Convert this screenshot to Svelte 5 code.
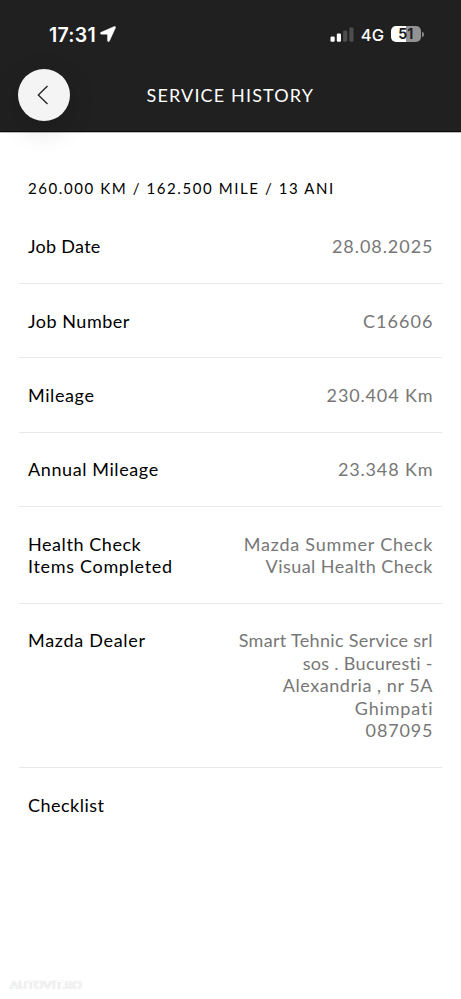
<script>
  // Each line is [text, tracking in px].
  const rows = [
    { label: [['Job Date', 0.28]], value: [['28.08.2025', 0.95]] },
    { label: [['Job Number', 0.52]], value: [['C16606', 1.05]] },
    { label: [['Mileage', 0.6]], value: [['230.404 Km', 0.85]] },
    { label: [['Annual Mileage', 0.6]], value: [['23.348 Km', 0.85]] },
    {
      label: [['Health Check', 0.56], ['Items Completed', 0.68]],
      value: [['Mazda Summer Check', 0.76], ['Visual Health Check', 0.46]]
    },
    {
      label: [['Mazda Dealer', 0.7]],
      value: [
        ['Smart Tehnic Service srl', 0.32],
        ['sos . Bucuresti -', 0.3],
        ['Alexandria , nr 5A', 0.55],
        ['Ghimpati', 0.83],
        ['087095', 0.85]
      ]
    },
    { label: [['Checklist', 0.48]], value: [] }
  ];
</script>

<div class="screen">
  <header>
    <div class="status">
      <span class="time">17:31</span>
      <svg class="arrow" width="16" height="16" viewBox="0 0 16 16"><path d="M14.2.5 1 6.3C-.2 6.900.1 8.300 1.300 8.300h5.600c.4 0 .6.2.6.6v5.600c0 1.400 1.500 1.600 2 .4L15.500 1.800C15.900.8 15.200.1 14.200.5Z" fill="#fff" stroke="#fff" stroke-width="0.400" /></svg>
      <span class="gap"></span>
      <svg class="signal" width="24" height="16" viewBox="0 0 24 16">
        <rect x="0.500" y="9.500" width="4.200" height="5.200" rx="1.200" fill="#fff" />
        <rect x="6.800" y="6.500" width="4.200" height="8.200" rx="1.200" fill="#fff" />
        <rect x="13.100" y="3.500" width="4.200" height="11.200" rx="1.200" fill="#4d4d4d" />
        <rect x="19.300" y="0.500" width="4.200" height="14.200" rx="1.200" fill="#4d4d4d" />
      </svg>
      <span class="net">4G</span>
      <span class="battery"><span class="level">51</span><i class="cap"></i></span>
    </div>
    <div class="bar">
      <button aria-label="Back">
        <svg width="12" height="20" viewBox="0 0 12 20"><path d="M10.500 1 1.300 10l9.200 9" fill="none" stroke="#222" stroke-width="1.300" /></svg>
      </button>
      <h1>SERVICE HISTORY</h1>
    </div>
  </header>
  <main>
    <h2>260.000 KM / 162.500 MILE / 13 ANI</h2>
    {#each rows as row}
      <section class="row">
        <div class="label">
          {#each row.label as [text, tracking]}<div style="letter-spacing: {tracking}px">{text}</div>{/each}
        </div>
        <div class="value">
          {#each row.value as [text, tracking]}<div style="letter-spacing: {tracking}px; margin-right: {-tracking}px">{text}</div>{/each}
        </div>
      </section>
    {/each}
  </main>
  <footer>AUTOVIT.RO</footer>
</div>

<style>
  .screen {
    width: 461px;
    height: 999px;
    display: flex;
    flex-direction: column;
    overflow: hidden;
    background: #fff;
    font-family: Lato, sans-serif;
  }
  header {
    height: 132px;
    flex: none;
    box-sizing: border-box;
    background: #202020;
    border-bottom: 1px solid #0c0c0c;
    box-shadow: 0 1px #b8b8b8;
    color: #fff;
  }
  .status {
    height: 69px;
    display: flex;
    align-items: center;
    padding: 0 40.500px 0 49px;
    box-sizing: border-box;
    font-family: Inter, sans-serif;
  }
  .time { font-size: 19.500px; font-weight: 600; letter-spacing: 0.250px; }
  .arrow { margin-left: 4.500px; margin-top: -1px; }
  .gap { flex: 1; }
  .net { font-size: 16.500px; font-weight: 500; margin: 0 7px 0 6.500px; }
  .battery {
    position: relative;
    width: 29.500px;
    height: 16px;
    margin-top: -1px;
    border-radius: 5px;
    background: linear-gradient(90deg, #fff 51%, #929292 51%);
    color: #202020;
    font-size: 14px;
    line-height: 16px;
    font-weight: 700;
    text-align: center;
  }
  .cap {
    position: absolute;
    left: 30.500px;
    top: 5.500px;
    width: 2px;
    height: 5px;
    border-radius: 0 2px 2px 0;
    background: #858585;
  }
  .bar { display: flex; align-items: center; height: 52px; padding-left: 18px; }
  button {
    width: 52px;
    height: 52px;
    flex: none;
    padding: 0 2px 0 0;
    border: 0;
    border-radius: 50%;
    background: #f4f4f4;
    display: flex;
    align-items: center;
    justify-content: center;
    box-shadow: 0 8px 28px rgba(0, 0, 0, 0.160);
  }
  h1 { margin: 0 0 0 76.500px; font-size: 18px; font-weight: 400; letter-spacing: 1.150px; white-space: nowrap; }
  main { padding: 0 19px; color: #000; flex: 1; }
  h2 {
    margin: 0;
    padding: 45px 9px 9.700px;
    font-size: 15px;
    line-height: 23px;
    font-weight: 400;
    letter-spacing: 1.580px;
    white-space: nowrap;
  }
  .row {
    display: flex;
    justify-content: space-between;
    padding: 25.800px 9.500px 25px 9px;
    border-bottom: 1px solid #e9e9e9;
    font-size: 18px;
    line-height: 22.500px;
    white-space: nowrap;
  }
  .row:last-child { border: 0; }
  .value { color: #777; text-align: right; }
  footer { padding: 0 0 6px 10px; font-size: 12px; line-height: 16px; letter-spacing: 0.200px; color: #fff; text-shadow: 0 0 1px #aaa; }
</style>
